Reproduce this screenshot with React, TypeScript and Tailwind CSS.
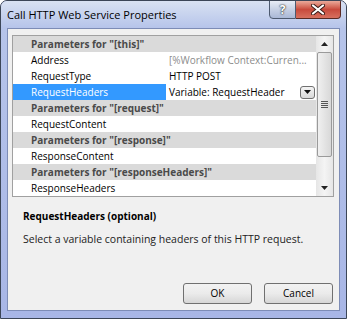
import React from "react";

type Row =
  | { kind: "header"; text: string }
  | { kind: "prop"; label: string; value?: string; muted?: boolean; selected?: boolean; dropdown?: boolean };

const rows: Row[] = [
  { kind: "header", text: 'Parameters for "[this]"' },
  { kind: "prop", label: "Address", value: "[%Workflow Context:Curren...", muted: true },
  { kind: "prop", label: "RequestType", value: "HTTP POST" },
  { kind: "prop", label: "RequestHeaders", value: "Variable: RequestHeader", selected: true, dropdown: true },
  { kind: "header", text: 'Parameters for "[request]"' },
  { kind: "prop", label: "RequestContent" },
  { kind: "header", text: 'Parameters for "[response]"' },
  { kind: "prop", label: "ResponseContent" },
  { kind: "header", text: 'Parameters for "[responseHeaders]"' },
  { kind: "prop", label: "ResponseHeaders" },
];

const GridRow = ({ row }: { row: Row }) => {
  if (row.kind === "header") {
    return (
      <div className="h-[16px] flex items-center bg-[#dadada] pl-[18px] font-bold text-[#4a4a4a] whitespace-nowrap overflow-hidden">
        {row.text}
      </div>
    );
  }
  return (
    <div className="h-[16px] flex bg-white">
      <div
        className={
          row.selected
            ? "w-[153px] flex items-center pl-[18px] bg-[#3399ff] text-white"
            : "w-[153px] flex items-center pl-[18px] text-black"
        }
      >
        {row.label}
      </div>
      <div className="flex-1 flex items-center pl-[3px] pr-[1px] whitespace-nowrap overflow-hidden">
        <span className={row.muted ? "text-[#8c8c8c] flex-1" : "text-black flex-1"}>{row.value}</span>
        {row.dropdown && (
          <div className="w-[15px] h-[13px] rounded-[3px] border border-[#707070] bg-gradient-to-b from-[#f4f4f4] to-[#d9d9d9] flex items-center justify-center">
            <svg width="7" height="4" viewBox="0 0 7 4">
              <path d="M0 0 H7 L3.5 4 Z" fill="#111" />
            </svg>
          </div>
        )}
      </div>
    </div>
  );
};

const ScrollBar = () => (
  <div className="w-[17px] flex flex-col bg-gradient-to-r from-[#e6e6e6] via-[#f4f4f4] to-[#e6e6e6]">
    <div className="h-[16px] flex items-center justify-center">
      <svg width="7" height="4" viewBox="0 0 7 4">
        <path d="M3.5 0 L7 4 H0 Z" fill="#222" />
      </svg>
    </div>
    <div className="h-[105px] mx-[1px] rounded-[2px] border border-[#9a9a9a] bg-gradient-to-r from-[#f0f0f0] to-[#d8d8d8] flex items-center justify-center">
      <div className="flex flex-col gap-[1px]">
        <div className="w-[7px] h-[1px] bg-[#555]" />
        <div className="w-[7px] h-[1px] bg-[#555]" />
        <div className="w-[7px] h-[1px] bg-[#555]" />
        <div className="w-[7px] h-[1px] bg-[#555]" />
      </div>
    </div>
    <div className="flex-1" />
    <div className="h-[16px] flex items-center justify-center">
      <svg width="7" height="4" viewBox="0 0 7 4">
        <path d="M0 0 H7 L3.5 4 Z" fill="#222" />
      </svg>
    </div>
  </div>
);

export default function App() {
  return (
    <div
      className="w-[347px] h-[319px] bg-white"
      style={{ fontFamily: '"Open Sans", "Liberation Sans", sans-serif' }}
    >
      <div className="w-[347px] h-[319px] flex flex-col rounded-t-[7px] border border-[#3c4657] bg-[#a8b6e6] overflow-hidden">
        {/* title bar */}
        <div className="h-[27px] flex items-start shrink-0 bg-gradient-to-b from-[#d9e2f2] to-[#b6c4ea]">
          <div className="pl-[6px] pt-[6px] text-[11px] text-black whitespace-nowrap">
            Call HTTP Web Service Properties
          </div>
          <div className="flex-1" />
          <div className="flex mr-[5px] -mt-[1px]">
            <div className="w-[27px] h-[19px] rounded-bl-[4px] border border-[#4d5a70] bg-gradient-to-b from-[#e8edf6] via-[#c6d0e4] to-[#aab8d6] flex items-center justify-center">
              <span className="text-[12px] font-bold text-white [text-shadow:0_0_2px_#222,0_0_1px_#222]">?</span>
            </div>
            <div className="w-[45px] h-[19px] rounded-br-[4px] border border-l-0 border-[#5a2a24] bg-gradient-to-b from-[#e9a99a] via-[#c84a3c] to-[#d7705f] flex items-center justify-center">
              <svg width="14" height="11" viewBox="0 0 14 11">
                <path d="M2 1.5 L12 9.5 M12 1.5 L2 9.5" stroke="#3a1a16" strokeWidth="4" strokeLinecap="round" />
                <path d="M2 1.5 L12 9.5 M12 1.5 L2 9.5" stroke="#fff" strokeWidth="2.2" strokeLinecap="round" />
              </svg>
            </div>
          </div>
        </div>

        {/* client area */}
        <div className="flex-1 flex px-[6px] pb-[7px] bg-gradient-to-b from-[#b6c4ea] to-[#a8b6e6]">
          <div className="flex-1 flex flex-col bg-[#f0f0f0] border border-[#7d8cb6] text-[10px]">
            <div className="mt-[6px] mx-[4px] mr-[5px] h-[162px] flex border border-[#a0a0a0] bg-white">
              <div className="flex-1 flex flex-col">
                {rows.map((r, i) => (
                  <GridRow key={i} row={r} />
                ))}
              </div>
              <ScrollBar />
            </div>

            <div className="flex-1 pl-[15px] pt-[12px]">
              <div className="font-bold text-black leading-[14px]">RequestHeaders (optional)</div>
              <div className="mt-[9px] text-[#222] text-[10.5px] leading-[14px]">
                Select a variable containing headers of this HTTP request.
              </div>
            </div>

            <div className="flex justify-end gap-[12px] pr-[6px] pb-[6px]">
              <button className="w-[69px] h-[21px] rounded-[3px] border border-[#707070] bg-gradient-to-b from-[#f2f2f2] via-[#ebebeb] to-[#d6d6d6] text-black text-[10px]">
                OK
              </button>
              <button className="w-[69px] h-[21px] rounded-[3px] border border-[#707070] bg-gradient-to-b from-[#f2f2f2] via-[#ebebeb] to-[#d6d6d6] text-black text-[10px]">
                Cancel
              </button>
            </div>
          </div>
        </div>
      </div>
    </div>
  );
}
